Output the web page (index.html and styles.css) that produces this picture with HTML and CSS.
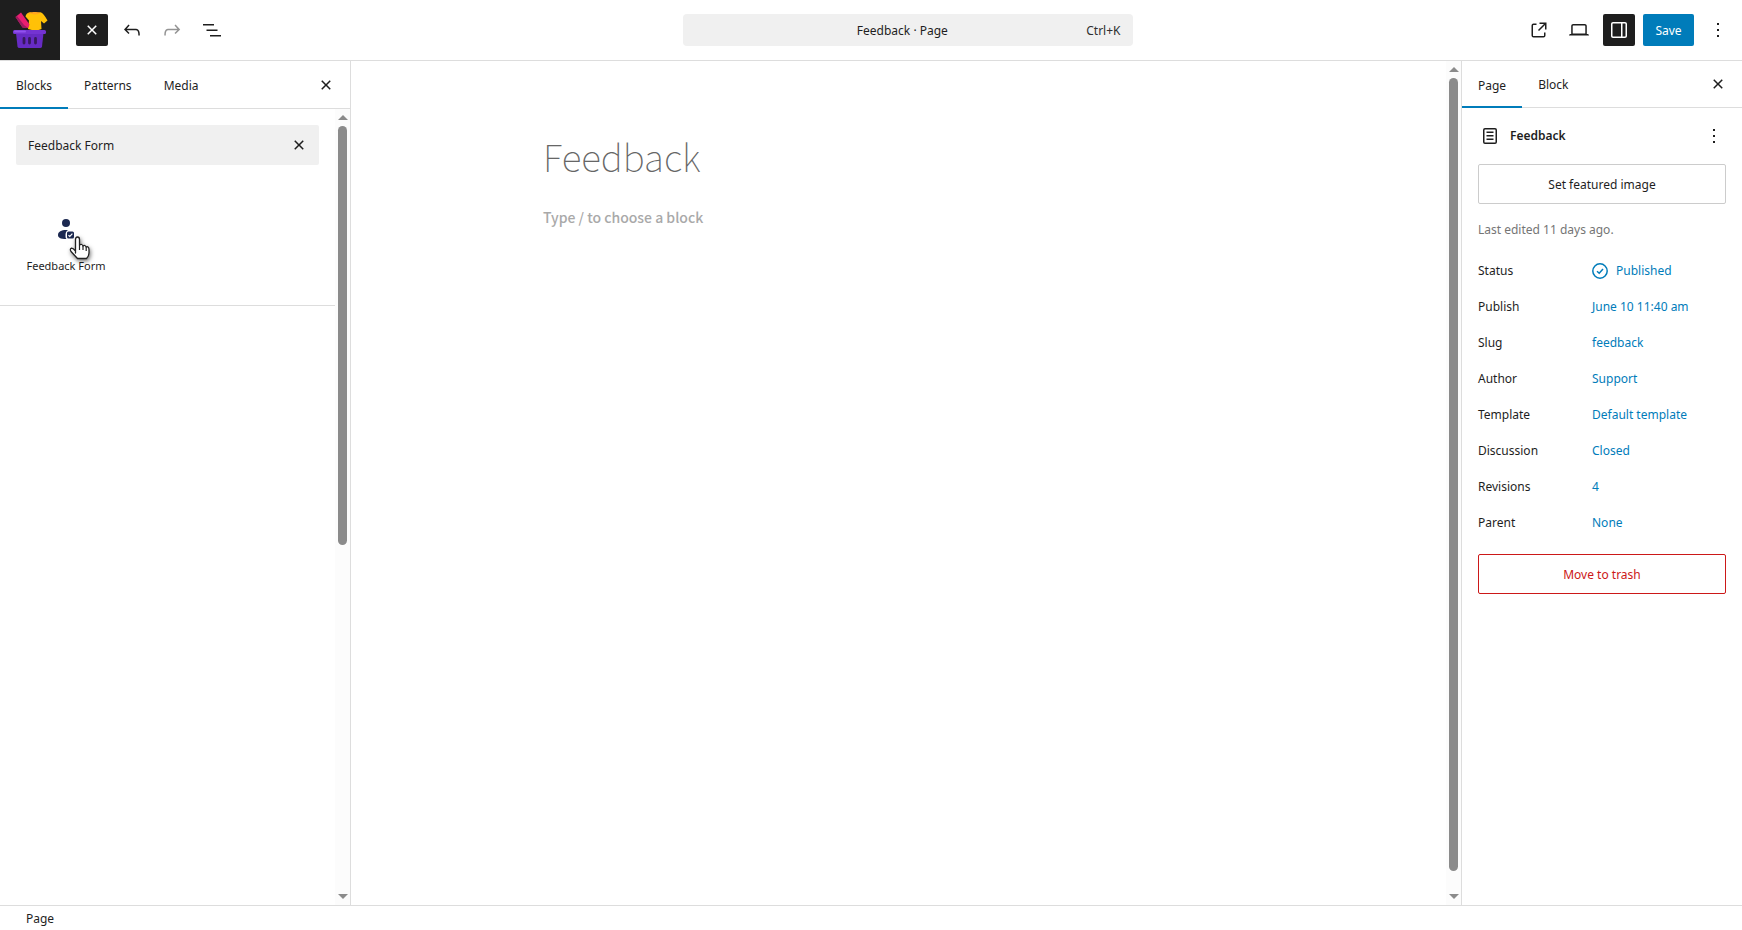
FILE: index.html
```html
<!DOCTYPE html>
<html lang="en">
<head>
<meta charset="utf-8">
<title>Feedback · Page</title>
<link rel="stylesheet" href="styles.css">
</head>
<body>
<div class="editor">
  <header class="header">
    <div class="header-start">
      <a class="site-hub" href="#" aria-label="View pages">
        <svg width="36" height="40" viewBox="0 0 36 40">
          <path d="M13.500 6.500Q14 3 18 2.200 23 4 28.500 2.200 31.500 3 35.500 10.500L32 13.500 29 11 29.500 19Q24 21.500 16 19L17 10.500Z" fill="#ffc107"/>
          <path d="M15 4.200Q18 1.800 22 2 27 1.700 28.500 2.800 24 5.800 19 3.600Z" fill="#ffa51f"/>
          <path d="M3.500 7 9 2.500 17.500 14.500 16 18 10.500 17.500Z" fill="#e91e70"/>
          <path d="M3.500 7 4.800 5.700 12 15 16 18 10.500 17.500Z" fill="#9c1c60"/>
          <path d="M4 23H31.500L30 36.500Q29.800 38 28 38H7.500Q5.700 38 5.500 36.500Z" fill="#672bc4"/>
          <rect x="1" y="20" width="33" height="4" rx="1.500" fill="#7433d2"/>
          <rect x="2" y="20.500" width="12" height="2" rx="1" fill="#9052ee"/>
          <path d="M12 28.500v4.500M17.500 28.500v4.500M23.500 28.500v4.500" stroke="#38185f" stroke-width="2.800" stroke-linecap="round"/>
        </svg>
      </a>
      <div class="tools">
        <button class="icon-button dark" aria-label="Close block inserter"><svg class="icon" viewBox="0 0 24 24"><path d="M12 13.060l3.712 3.713 1.061-1.060L13.061 12l3.712-3.712-1.060-1.060L12 10.938 8.288 7.227l-1.061 1.060L10.939 12l-3.712 3.712 1.060 1.061L12 13.061z"/></svg></button>
        <button class="icon-button" aria-label="Undo"><svg class="icon" viewBox="0 0 24 24"><path d="M18.300 11.700c-.6-.6-1.400-.9-2.300-.9H6.700l2.900-3.300-1.100-1-4.500 5L8.500 16l1-1-2.700-2.700H16c.5 0 .9.2 1.300.5 1 1 1 3.400 1 4.500v.3h1.500v-.2c0-1.500 0-4.300-1.500-5.700z"/></svg></button>
        <button class="icon-button" aria-label="Redo" disabled><svg class="icon" viewBox="0 0 24 24"><path d="M15.600 6.500l-1.100 1 2.900 3.300H8c-.9 0-1.700.3-2.300.9-1.400 1.500-1.400 4.200-1.400 5.600v.2h1.500v-.3c0-1.100 0-3.500 1-4.500.3-.3.700-.5 1.300-.5h9.200L14.500 15l1.100 1.100 4.600-4.600-4.600-5z"/></svg></button>
        <button class="icon-button" aria-label="Document overview"><svg class="icon" viewBox="0 0 24 24"><path d="M3 6h11v1.500H3V6Zm3.500 5.500h11V13h-11v-1.500ZM21 17H10v1.500h11V17Z"/></svg></button>
      </div>
    </div>
    <div class="header-center">
      <button class="command">
        <span class="command-title">Feedback · Page</span>
        <span class="command-key">Ctrl+K</span>
      </button>
    </div>
    <div class="header-end">
      <button class="icon-button" aria-label="View page"><svg class="icon" viewBox="0 0 24 24"><path d="M19.500 4.500h-7V6h4.440l-5.970 5.970 1.060 1.060L18 7.060v4.440h1.500v-7Zm-13 1a2 2 0 0 0-2 2v10a2 2 0 0 0 2 2h10a2 2 0 0 0 2-2v-3H17v3a.5.5 0 0 1-.5.5h-10a.5.5 0 0 1-.5-.5v-10a.5.5 0 0 1 .5-.5h3V5.500h-3Z"/></svg></button>
      <button class="icon-button" aria-label="Preview"><svg class="icon" viewBox="0 0 24 24"><path d="M20.500 16h-.7V8c0-1.100-.9-2-2-2H6.200c-1.100 0-2 .9-2 2v8h-.7c-.8 0-1.500.7-1.500 1.500h20c0-.8-.7-1.500-1.500-1.500zM5.700 8c0-.3.2-.5.5-.5h11.600c.3 0 .5.2.5.5v7.600H5.700V8z"/></svg></button>
      <button class="icon-button dark" aria-label="Settings"><svg class="icon" viewBox="0 0 24 24"><path d="M18 4H6c-1.100 0-2 .9-2 2v12c0 1.100.9 2 2 2h12c1.100 0 2-.9 2-2V6c0-1.100-.9-2-2-2zm-4 14.500H6c-.3 0-.5-.2-.5-.5V6c0-.3.2-.5.5-.5h8v13zm4.500-.5c0 .3-.2.5-.5.5h-2.500v-13H18c.3 0 .5.2.5.5v12z"/></svg></button>
      <button class="save">Save</button>
      <button class="icon-button" aria-label="Options"><svg class="icon" viewBox="0 0 24 24"><path d="M13 19h-2v-2h2v2zm0-6h-2v-2h2v2zm0-6h-2V5h2v2z"/></svg></button>
    </div>
  </header>

  <div class="body">
    <aside class="inserter">
      <div class="tabs inserter-tabs">
        <button class="tab active">Blocks</button>
        <button class="tab">Patterns</button>
        <button class="tab">Media</button>
        <button class="icon-button tabs-close" aria-label="Close block inserter"><svg class="icon" viewBox="0 0 24 24"><path d="M12 13.060l3.712 3.713 1.061-1.060L13.061 12l3.712-3.712-1.060-1.060L12 10.938 8.288 7.227l-1.061 1.060L10.939 12l-3.712 3.712 1.060 1.061L12 13.061z"/></svg></button>
      </div>
      <div class="scroll-area">
        <div class="scroll-content">
          <div class="search">
            <input type="text" class="search-input" aria-label="Search blocks" value="Feedback Form">
            <button class="icon-button" aria-label="Reset search"><svg class="icon" viewBox="0 0 24 24"><path d="M12 13.060l3.712 3.713 1.061-1.060L13.061 12l3.712-3.712-1.060-1.060L12 10.938 8.288 7.227l-1.061 1.060L10.939 12l-3.712 3.712 1.060 1.061L12 13.061z"/></svg></button>
          </div>
          <div class="blocks">
            <button class="block">
              <svg width="24" height="24" viewBox="0 0 24 24" fill="#1c2951">
                <circle cx="12" cy="6" r="4"/>
                <path d="M12 13C7.500 13 4 14.500 4 18c0 2.500 2 4 8.500 4-1-1-1-2-1-4s.5-4 2.500-5z"/>
                <rect x="13" y="14.500" width="7" height="7" rx="1.500"/>
                <path d="M14.500 18.200l1.300 1.200 2.600-2.700" fill="none" stroke="#fff" stroke-width="1.200"/>
              </svg>
              <span>Feedback Form</span>
              <svg class="pointer" width="28" height="36" viewBox="0 0 28 36">
                <path d="M7.500 18V4.500Q7.500 2 9.500 2T11.500 4.500V10Q14 8.500 15 11 17 9.500 18.200 12 20.800 11 21 14.500V18Q21 21 18.500 23.500H9.500L3 16.500Q1.500 14 3.500 13.200 5 13 7.500 16Z" fill="#fff" stroke="#222" stroke-width="1.300" stroke-linejoin="round"/>
                <path d="M11.500 10v5M15 11v4M18.200 12v4" stroke="#222" stroke-width="1.200"/>
              </svg>
            </button>
          </div>
        </div>
        <div class="scrollbar" aria-hidden="true"><i class="arrow up"></i><i class="track"><i class="thumb half"></i></i><i class="arrow down"></i></div>
      </div>
    </aside>

    <main class="canvas scroll-area">
      <div class="scroll-content page">
        <h1 class="page-title">Feedback</h1>
        <p class="placeholder">Type / to choose a block</p>
      </div>
      <div class="scrollbar" aria-hidden="true"><i class="arrow up"></i><i class="track"><i class="thumb"></i></i><i class="arrow down"></i></div>
    </main>

    <aside class="settings">
      <div class="tabs settings-tabs">
        <button class="tab active">Page</button>
        <button class="tab">Block</button>
        <button class="icon-button tabs-close" aria-label="Close settings"><svg class="icon" viewBox="0 0 24 24"><path d="M12 13.060l3.712 3.713 1.061-1.060L13.061 12l3.712-3.712-1.060-1.060L12 10.938 8.288 7.227l-1.061 1.060L10.939 12l-3.712 3.712 1.060 1.061L12 13.061z"/></svg></button>
      </div>
      <div class="summary">
        <div class="card">
          <svg class="icon" viewBox="0 0 24 24"><path d="M15.500 7.500h-7V9h7V7.500Zm-7 3.500h7v1.500h-7V11Zm7 3.500h-7V16h7v-1.500Z"/><path d="M17 4H7a2 2 0 0 0-2 2v12a2 2 0 0 0 2 2h10a2 2 0 0 0 2-2V6a2 2 0 0 0-2-2ZM7 5.500h10a.5.5 0 0 1 .5.5v12a.5.5 0 0 1-.5.5H7a.5.5 0 0 1-.5-.5V6a.5.5 0 0 1 .5-.5Z"/></svg>
          <h2 class="card-title">Feedback</h2>
          <button class="icon-button small" aria-label="Actions"><svg class="icon" viewBox="0 0 24 24"><path d="M13 19h-2v-2h2v2zm0-6h-2v-2h2v2zm0-6h-2V5h2v2z"/></svg></button>
        </div>
        <button class="wide-button">Set featured image</button>
        <p class="edited">Last edited 11 days ago.</p>
        <div class="rows">
          <div class="row"><span id="l1">Status</span><button class="value" aria-describedby="l1"><svg width="16" height="16" viewBox="0 0 16 16" fill="none" stroke="currentColor" stroke-width="1.500"><circle cx="8" cy="8" r="7.200"/><path d="M5 8.200l2.200 2L11 6"/></svg>Published</button></div>
          <div class="row"><span id="l2">Publish</span><button class="value" aria-describedby="l2">June 10 11:40 am</button></div>
          <div class="row"><span id="l3">Slug</span><button class="value" aria-describedby="l3">feedback</button></div>
          <div class="row"><span id="l4">Author</span><button class="value" aria-describedby="l4">Support</button></div>
          <div class="row"><span id="l5">Template</span><button class="value" aria-describedby="l5">Default template</button></div>
          <div class="row"><span id="l6">Discussion</span><button class="value" aria-describedby="l6">Closed</button></div>
          <div class="row"><span id="l7">Revisions</span><a class="value" href="#" aria-describedby="l7">4</a></div>
          <div class="row"><span id="l8">Parent</span><button class="value" aria-describedby="l8">None</button></div>
        </div>
        <button class="wide-button trash">Move to trash</button>
      </div>
    </aside>
  </div>

  <footer class="footer">Page</footer>
</div>
</body>
</html>
```
FILE: styles.css
```css
* { box-sizing: border-box; }

body {
  margin: 0;
  background: #fff;
  color: #1e1e1e;
  font: 12px/20px "Noto Sans", "Open Sans", sans-serif;
}

button, input {
  margin: 0;
  padding: 0;
  border: 0;
  background: none;
  color: inherit;
  font: inherit;
}

h1, h2, p { margin: 0; }
a { color: inherit; text-decoration: none; }
svg { display: block; flex: none; }

.editor { display: flex; flex-direction: column; height: 100vh; }

.icon { width: 24px; height: 24px; fill: currentColor; }
.icon-button {
  display: flex;
  flex: none;
  align-items: center;
  justify-content: center;
  width: 32px;
  height: 32px;
  border-radius: 2px;
}
.icon-button.small { width: 24px; height: 24px; }
.icon-button.dark { background: #1e1e1e; color: #fff; }
.icon-button:disabled { color: #949494; }

/* Top bar */
.header { display: flex; align-items: center; border-bottom: 1px solid #ddd; }
.header-start { display: flex; flex: none; width: 292px; }
.site-hub {
  display: flex;
  align-items: center;
  justify-content: center;
  width: 60px;
  height: 60px;
  background: #1e1e1e;
}
.tools { display: flex; align-items: center; gap: 8px; padding-left: 16px; }
.header-center { display: flex; flex: 1; justify-content: center; }
.command {
  display: flex;
  align-items: center;
  width: 450px;
  height: 32px;
  padding: 2px 12px 0 36px;
  border-radius: 4px;
  background: #f0f0f0;
}
.command-title { flex: 1; text-align: center; }
.command-key { color: #2f2f2f; }
.header-end { display: flex; flex: none; gap: 8px; padding-right: 8px; }
.save { min-width: 51px; height: 32px; padding: 2px 12px 0; border-radius: 2px; background: #007cba; color: #fff; }

/* Layout */
.body { display: flex; flex: 1; min-height: 0; }
.inserter { display: flex; flex: none; flex-direction: column; width: 351px; border-right: 1px solid #ddd; }
.canvas { min-width: 0; }
.settings { flex: none; width: 281px; border-left: 1px solid #ddd; }
.footer { padding: 3px 26px 1px; border-top: 1px solid #ddd; }

/* Tabs */
.tabs { display: flex; border-bottom: 1px solid #ddd; }
.inserter-tabs { height: 48px; padding-right: 8px; }
.settings-tabs { height: 47px; padding-right: 8px; }
.tab { height: 100%; padding: 2px 16px 0; }
.tab.active { height: calc(100% + 1px); box-shadow: inset 0 -2px #007cba; }
.tabs-close { align-self: center; margin-left: auto; }

/* Scrolling areas */
.scroll-area { display: flex; flex: 1; min-height: 0; }
.scroll-content { flex: 1; min-width: 0; }
.scrollbar {
  display: flex;
  flex: none;
  flex-direction: column;
  align-items: center;
  width: 15px;
  padding: 6px 0;
  background: #fcfcfc;
}
.arrow { border: 5px solid transparent; border-top-width: 0; border-bottom: 5px solid #8b8b8b; }
.arrow.down { border-top: 5px solid #8b8b8b; border-bottom-width: 0; }
.track { flex: 1; width: 9px; padding: 6px 0 7px; }
.thumb { display: block; height: 98%; border-radius: 5px; background: #8b8b8b; }
.thumb.half { height: 55%; }

/* Inserter */
.search {
  display: flex;
  align-items: center;
  height: 40px;
  margin: 16px 16px 0;
  padding: 0 4px 0 12px;
  border-radius: 2px;
  background: #f0f0f0;
}
.search-input { flex: 1; min-width: 0; padding-top: 2px; outline: 0; }
.blocks {
  display: grid;
  grid-template-columns: repeat(3, 100px);
  padding: 40px 16px 24px;
  border-bottom: 1px solid #ddd;
}
.block {
  display: flex;
  position: relative;
  flex-direction: column;
  align-items: center;
  gap: 15px;
  padding: 12px 0 5px;
  font-size: 11px;
  white-space: nowrap;
}
.pointer { position: absolute; top: 30px; left: 52px; filter: drop-shadow(1px 2px 2px #0008); }

/* Canvas */
.page { padding: 67px 192px; font-family: "Noto Sans CJK SC", "Noto Sans", sans-serif; }
.page-title { color: #666; font-size: 37px; font-weight: 100; line-height: 56px; }
.placeholder { margin-top: 21px; color: #a9a9a9; font-size: 14px; font-weight: 500; line-height: 24px; }

/* Settings */
.summary { padding: 16px; }
.card { display: flex; align-items: center; gap: 8px; margin-bottom: 16px; }
.card-title { flex: 1; font-size: 12px; font-weight: 600; line-height: 20px; }
.wide-button { display: block; width: 100%; height: 40px; padding-top: 2px; border: 1px solid #ccc; border-radius: 2px; }
.edited { margin: 16px 0 15px; color: #757575; }
.rows { display: grid; gap: 4px; }
.row { display: grid; grid-template-columns: 114px 1fr; align-items: center; height: 32px; }
.value { display: flex; align-items: center; gap: 8px; color: #007cba; }
.trash { margin-top: 15px; border-color: #cc1818; color: #cc1818; }
```
